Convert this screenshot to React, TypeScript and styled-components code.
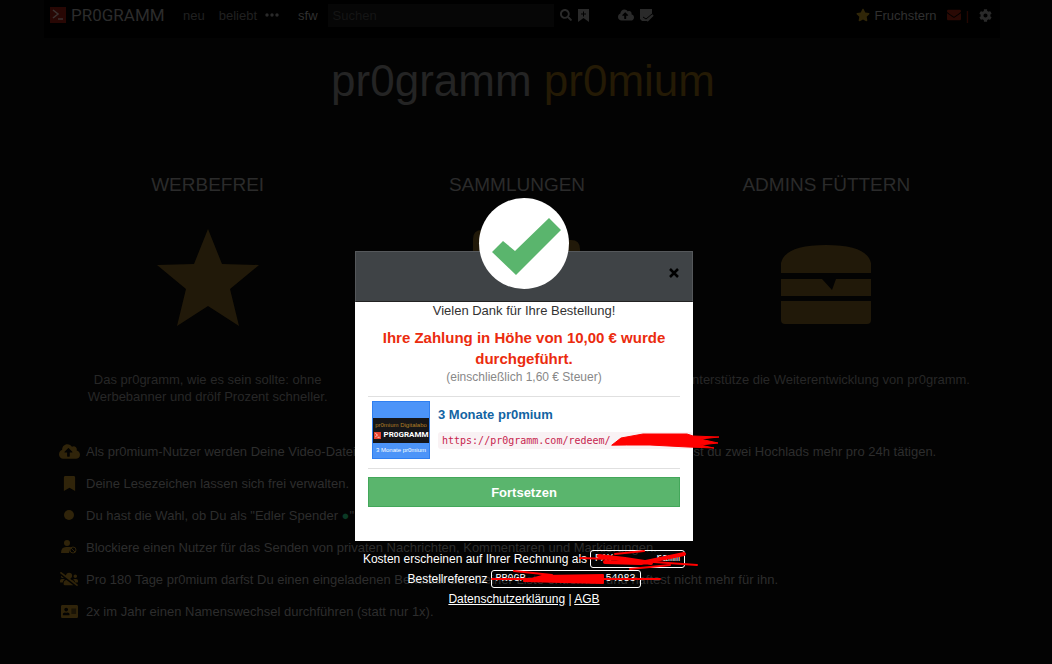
import React from 'react';
import styled, { createGlobalStyle } from 'styled-components';
import { FaSearch, FaCloudUploadAlt, FaBookmark, FaCog, FaStar, FaEnvelope, FaAddressCard, FaUsersSlash } from 'react-icons/fa';

const Global = createGlobalStyle`
  * { box-sizing: border-box; }
  body { margin: 0; background: #030303; font-family: "Liberation Sans", Arial, sans-serif; font-size: 13px; }
  h1, h2, h3, p, ul { margin: 0; padding: 0; font-weight: normal; }
`;

const Page = styled.div`
  min-height: 100vh;
  padding: 0 52px 32px 44px;
  color: #343434;
  overflow: hidden;
`;
const TopBar = styled.header`
  display: flex;
  align-items: center;
  height: 38px;
  padding: 0 8px 8px 6px;
  background: #000;
`;
const Logo = styled.a`
  display: flex;
  align-items: center;
  gap: 5px;
  width: 133px;
  color: #2c2c2c;
  font: 17px Roboto, sans-serif;
  text-decoration: none;
`;
const NavLink = styled.a<{ $before?: number; $after: number; $bright?: boolean }>`
  margin: 0 ${p => p.$after}px 0 ${p => p.$before || 0}px;
  color: ${p => (p.$bright ? '#303030' : '#202020')};
  text-decoration: none;
`;
const Search = styled.input`
  width: 226px;
  height: 23px;
  padding: 0 5px;
  border: 0;
  background: #060606;
  color: #222;
  font: 13px "Liberation Sans", Arial, sans-serif;
  &::placeholder { color: #151515; opacity: 1; }
`;
const IconButton = styled.button<{ $gap: number }>`
  display: flex;
  padding: 0;
  margin-left: ${p => p.$gap}px;
  border: 0;
  background: none;
  color: #2a2a2a;
`;
const User = styled.a`
  display: flex;
  align-items: center;
  gap: 4px;
  margin-left: auto;
  color: #303030;
  text-decoration: none;
  svg { color: #302608; }
`;
const Inbox = styled.a`
  display: flex;
  align-items: center;
  gap: 5px;
  margin-left: 10px;
  color: #2a0904;
  text-decoration: none;
`;
const Title = styled.h1`
  padding: 17px 0 0 2px;
  font-size: 44px;
  line-height: 52px;
  text-align: center;
  color: #242424;
`;
const Gold = styled.span`color: #241a05;`;
const Perks = styled.section`
  display: grid;
  grid-template-columns: repeat(3, 1fr);
  margin: 66px 19px 0 9px;
  text-align: center;
`;
const Perk = styled.article`
  color: #272727;
  h2 { font-size: 19px; line-height: 24px; color: #2b2b2b; }
  svg { display: block; margin: 28px auto 40px; }
  p { line-height: 17px; }
`;
const Features = styled.ul`
  display: grid;
  grid-template-rows: repeat(6, 32px);
  align-items: center;
  margin: 30px 0 0 14px;
  list-style: none;
`;
const Feature = styled.li`
  display: grid;
  grid-template-columns: 22px max-content;
  align-items: center;
  gap: 6px;
  color: #2d2d2d;
  svg { justify-self: center; color: #30240a; }
`;
const Dot = styled.span`color: #0b3a25;`;

const Overlay = styled.div`
  position: absolute;
  inset: 198px 0 auto;
  display: flex;
  flex-direction: column;
  align-items: center;
  padding-right: 4px;
`;
const Seal = styled.div`
  position: relative;
  z-index: 1;
  width: 90px;
  height: 91px;
  margin-bottom: -38px;
  border-radius: 50%;
  background: #fff;
`;
const Dialog = styled.section`
  width: 338px;
  background: #fff;
  text-align: center;
`;
const DialogHead = styled.div`
  display: flex;
  justify-content: flex-end;
  align-items: center;
  height: 51px;
  padding: 0 13px 8px;
  border: 1px solid #55585b;
  border-bottom-color: #222;
  background: #3f4346;
`;
const Close = styled.button`
  display: flex;
  padding: 0;
  border: 0;
  background: none;
`;
const DialogBody = styled.div`
  padding: 0 13px 34px;
`;
const Thanks = styled.p`line-height: 18px; color: #333;`;
const Paid = styled.h2`
  padding-top: 7px;
  font-size: 15px;
  font-weight: bold;
  line-height: 21px;
  color: #eb2b0e;
`;
const Tax = styled.p`font-size: 12px; line-height: 16px; color: #888;`;
const Item = styled.div`
  display: flex;
  gap: 8px;
  margin: 11px 0 8px;
  padding: 4px 3px 9px 4px;
  border: solid #e0e0e0;
  border-width: 1px 0;
  text-align: left;
`;
const Thumb = styled.div`
  flex: none;
  width: 58px;
  height: 58px;
  border: 1px solid #2f7ff0;
  background: #4c94f8;
  color: #fff;
  text-align: center;
  font-size: 6px;
`;
const ThumbBand = styled.div`
  display: flex;
  flex-direction: column;
  justify-content: center;
  gap: 3px;
  height: 25px;
  margin: 16px 0 4px;
  background: #161618;
  color: #b08025;
  line-height: 6px;
`;
const ThumbLogo = styled.div`
  display: flex;
  align-items: center;
  justify-content: center;
  gap: 3px;
  color: #fff;
  font: bold 8px/8px Roboto, sans-serif;
`;
const ItemText = styled.div`
  flex: 1;
  min-width: 0;
  h3 { margin-top: 5px; font-size: 13px; font-weight: bold; line-height: 17px; color: #1264a3; }
`;
const Redeem = styled.div`
  position: relative;
  margin-top: 9px;
  width: 255px;
  height: 17px;
  padding-left: 4px;
  border-radius: 3px;
  background: #f9f2f4;
  color: #c7254e;
  font: 10px/17px "DejaVu Sans Mono", monospace;
`;
const Scribble = styled.svg`
  position: absolute;
  top: 0;
  left: 0;
  overflow: visible;
  fill: none;
  stroke: #f00;
  stroke-linecap: round;
  stroke-linejoin: round;
`;
const Submit = styled.button`
  width: 100%;
  height: 30px;
  border: 1px solid #43a75a;
  background: #5ab56d;
  color: #fff;
  font: bold 13px "Liberation Sans", Arial, sans-serif;
`;
const Foot = styled.footer`
  display: flex;
  flex-direction: column;
  align-items: center;
  gap: 2px;
  margin-top: 9px;
  color: #fff;
  font-size: 12px;
  line-height: 18px;
  a { color: #fff; }
`;
const FootLine = styled.div`display: flex; align-items: center; gap: 3px;`;
const Tag = styled.span<{ $width: number }>`
  position: relative;
  display: flex;
  justify-content: space-between;
  width: ${p => p.$width}px;
  height: 18px;
  padding: 0 4px;
  border: 1px solid #fff;
  border-radius: 3px;
  font: 10px/16px "Liberation Mono", monospace;
`;

const Mark = ({ size, red, ink }: { size: number; red: string; ink: string }) => (
  <svg width={size} height={size} viewBox="0 0 16 16">
    <rect width="16" height="16" fill={red} />
    <path d="M3 3l5 4-5 4M8 12h5" fill="none" stroke={ink} strokeWidth="1.6" />
  </svg>
);

export default function App() {
  return (
    <>
      <Global />
      <Page>
        <TopBar>
          <Logo href="#"><Mark size={16} red="#280704" ink="#3b3230" />PR0GRAMM</Logo>
          <NavLink href="#" $after={14}>neu</NavLink>
          <NavLink href="#" $after={8}>beliebt</NavLink>
          <IconButton $gap={0} aria-label="Mehr">
            <svg width="14" height="4" fill="currentColor"><circle cx="2" cy="2" r="1.700" /><circle cx="7" cy="2" r="1.700" /><circle cx="12" cy="2" r="1.700" /></svg>
          </IconButton>
          <NavLink href="#" $before={19} $after={10} $bright>sfw</NavLink>
          <Search placeholder="Suchen" aria-label="Suchen" />
          <IconButton $gap={6} aria-label="Suche starten"><FaSearch size={12} /></IconButton>
          <IconButton $gap={6} aria-label="Suche merken">
            <svg width="11" height="13" viewBox="0 0 11 13"><path d="M0 0h11v13L5.500 9 0 13z" fill="currentColor" /><path d="M3 5h5M5.500 2.500v5" stroke="#000" /></svg>
          </IconButton>
          <IconButton $gap={29} aria-label="Hochladen"><FaCloudUploadAlt size={16} /></IconButton>
          <IconButton $gap={6} aria-label="Beitrag schreiben">
            <svg width="14" height="13" viewBox="0 0 14 13"><path d="M0 0h12v6l-5 6H2L0 10z" fill="currentColor" /><path d="M3 8l3 2 6-5" stroke="#000" fill="none" /><path d="M7 12l6-6" stroke="currentColor" strokeWidth="2" /></svg>
          </IconButton>
          <User href="#"><FaStar size={14} />Fruchstern</User>
          <Inbox href="#" aria-label="Nachrichten"><FaEnvelope size={14} />|</Inbox>
          <IconButton $gap={10} aria-label="Einstellungen"><FaCog size={13} /></IconButton>
        </TopBar>
        <Title>pr0gramm <Gold>pr0mium</Gold></Title>
        <Perks>
          <Perk>
            <h2>WERBEFREI</h2>
            <svg width="102" height="106" viewBox="0 0 102 106"><path d="M51 4l14 35 37 1-29 24 9 37-31-20-31 20 9-37L0 40l37-1z" fill="#211909" /></svg>
            <p>Das pr0gramm, wie es sein sollte: ohne<br />Werbebanner und drölf Prozent schneller.</p>
          </Perk>
          <Perk>
            <h2>SAMMLUNGEN</h2>
            <svg width="128" height="106" viewBox="0 0 128 106"><path d="M20 14q0-9 9-9h40l10 10h39q9 0 9 9v63H20z" fill="#211909" /></svg>
          </Perk>
          <Perk>
            <h2>ADMINS FÜTTERN</h2>
            <svg width="92" height="106" viewBox="0 0 92 106"><path d="M1 48V38Q5 20 46 20T91 38v10zM1 54h41l10 11 4-11h35v17H1zM1 76h90v19q0 4-4 4H5q-4 0-4-4z" fill="#211909" /></svg>
            <p>Unterstütze die Weiterentwicklung von pr0gramm.</p>
          </Perk>
        </Perks>
        <Features>
          <Feature><FaCloudUploadAlt size={21} /><span>Als pr0mium-Nutzer werden Deine Video-Dateien in immer besserer Qualität gespeichert, zusätzlich kannst du zwei Hochlads mehr pro 24h tätigen.</span></Feature>
          <Feature><FaBookmark size={15} /><span>Deine Lesezeichen lassen sich frei verwalten.</span></Feature>
          <Feature><svg width="10" height="10"><circle cx="5" cy="5" r="5" fill="currentColor" /></svg><span>Du hast die Wahl, ob Du als "Edler Spender <Dot>●</Dot>"</span></Feature>
          <Feature>
            <svg width="16" height="14" viewBox="0 0 16 14" fill="currentColor"><circle cx="6" cy="3" r="3" /><path d="M0 13q0-6 5-6h5l-2 6z" /><circle cx="12" cy="10" r="3" fill="none" stroke="currentColor" /><path d="M10 8l4 4" stroke="currentColor" /></svg>
            <span>Blockiere einen Nutzer für das Senden von privaten Nachrichten, Kommentaren und Markierungen.</span>
          </Feature>
          <Feature><FaUsersSlash size={18} /><span>Pro 180 Tage pr0mium darfst Du einen eingeladenen Benutzer aus Deiner Liste entfernen und haftest nicht mehr für ihn.</span></Feature>
          <Feature><FaAddressCard size={17} /><span>2x im Jahr einen Namenswechsel durchführen (statt nur 1x).</span></Feature>
        </Features>
      </Page>
      <Overlay role="dialog" aria-label="Bestellung">
        <Seal>
          <svg width="90" height="91" viewBox="0 0 90 91"><path d="M13 54l11-11 12 10 34-33 12 12-45 45z" fill="#5ab56d" /></svg>
        </Seal>
        <Dialog>
          <DialogHead>
            <Close aria-label="Schließen"><svg width="10" height="10"><path d="M1 1l8 8M9 1L1 9" stroke="#000" strokeWidth="2.500" /></svg></Close>
          </DialogHead>
          <DialogBody>
            <Thanks>Vielen Dank für Ihre Bestellung!</Thanks>
            <Paid>Ihre Zahlung in Höhe von 10,00 € wurde durchgeführt.</Paid>
            <Tax>(einschließlich 1,60 € Steuer)</Tax>
            <Item>
              <Thumb>
                <ThumbBand>pr0mium Digitalabo<ThumbLogo><Mark size={7} red="#e8432e" ink="#fff" />PR0GRAMM</ThumbLogo></ThumbBand>
                3 Monate pr0mium
              </Thumb>
              <ItemText>
                <h3>3 Monate pr0mium</h3>
                <Redeem>
                  https://pr0gramm.com/redeem/
                  <Scribble width="282" height="17">
                    <path d="M174 13L183 6 205 2 249 2 255 4 281 5 262 7 280 11 262 13 276 16 250 15 212 13 189 13z" fill="#f00" />
                  </Scribble>
                </Redeem>
              </ItemText>
            </Item>
            <Submit>Fortsetzen</Submit>
          </DialogBody>
        </Dialog>
        <Foot>
          <FootLine>Kosten erscheinen auf Ihrer Rechnung als
            <Tag $width={95}><span>PAY</span><span>ramm</span>
              <Scribble width="95" height="18">
                <path d="M-11 7L20 8 106 14M24 3L53 0M39 18L79 14" strokeWidth="2" />
                <path d="M8 5L34 8 60 12M14 11L50 12 93 3" strokeWidth="4" />
              </Scribble>
            </Tag>
          </FootLine>
          <FootLine>Bestellreferenz
            <Tag $width={150}><span>PR0GR</span><span>54983</span>
              <Scribble width="150" height="18">
                <path d="M0 8L168 8M22 0L60 4" strokeWidth="2" />
                <path d="M32 10L50 5 111 4 111 12 70 11z" fill="#f00" strokeWidth="2" />
              </Scribble>
            </Tag>
          </FootLine>
          <div><a href="#">Datenschutzerklärung</a> | <a href="#">AGB</a></div>
        </Foot>
      </Overlay>
    </>
  );
}
